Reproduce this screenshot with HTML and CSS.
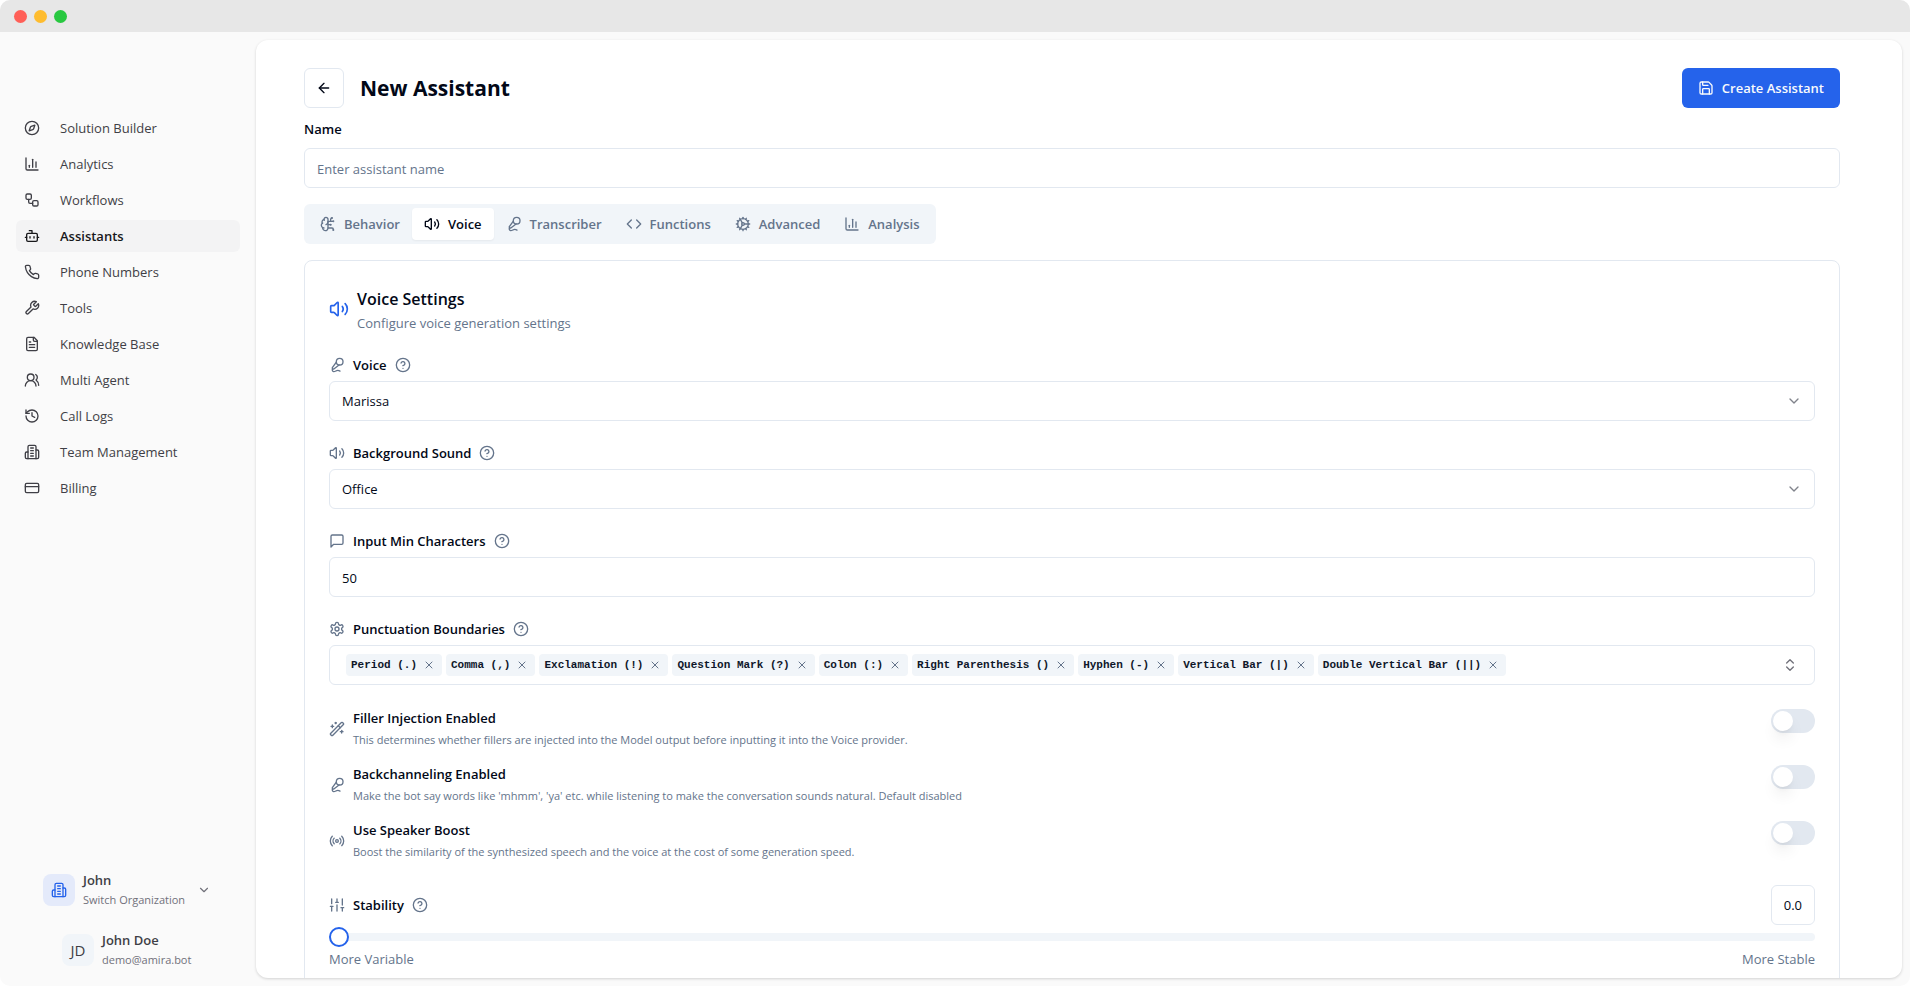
FILE: index.html
```
<!DOCTYPE html>
<html lang="en">
<head>
  <meta charset="utf-8">
  <meta name="viewport" content="width=device-width, initial-scale=1">
  <title>New Assistant</title>
  <link rel="stylesheet" href="styles.css">
</head>
<body>
  <!-- icon sprite -->
  <svg class="sprite" aria-hidden="true">
    <symbol id="i-compass" viewBox="0 0 24 24"><circle cx="12" cy="12" r="10"/><path d="m16.24 7.76-1.804 5.411a2 2 0 0 1-1.265 1.265L7.76 16.24l1.804-5.411a2 2 0 0 1 1.265-1.265z"/></symbol>
    <symbol id="i-chart" viewBox="0 0 24 24"><path d="M3 3v16a2 2 0 0 0 2 2h16"/><path d="M18 17V9"/><path d="M13 17V5"/><path d="M8 17v-3"/></symbol>
    <symbol id="i-workflow" viewBox="0 0 24 24"><rect width="8" height="8" x="3" y="3" rx="2"/><path d="M7 11v4a2 2 0 0 0 2 2h4"/><rect width="8" height="8" x="13" y="13" rx="2"/></symbol>
    <symbol id="i-bot" viewBox="0 0 24 24"><path d="M12 8V4H8"/><rect width="16" height="12" x="4" y="8" rx="2"/><path d="M2 14h2"/><path d="M20 14h2"/><path d="M15 13v2"/><path d="M9 13v2"/></symbol>
    <symbol id="i-phone" viewBox="0 0 24 24"><path d="M22 16.92v3a2 2 0 0 1-2.18 2 19.79 19.79 0 0 1-8.63-3.07 19.5 19.5 0 0 1-6-6 19.79 19.79 0 0 1-3.07-8.67A2 2 0 0 1 4.11 2h3a2 2 0 0 1 2 1.72 12.84 12.84 0 0 0 .7 2.81 2 2 0 0 1-.45 2.11L8.09 9.91a16 16 0 0 0 6 6l1.27-1.27a2 2 0 0 1 2.11-.45 12.84 12.84 0 0 0 2.81.7A2 2 0 0 1 22 16.92z"/></symbol>
    <symbol id="i-wrench" viewBox="0 0 24 24"><path d="M14.7 6.3a1 1 0 0 0 0 1.4l1.6 1.6a1 1 0 0 0 1.4 0l3.77-3.77a6 6 0 0 1-7.94 7.94l-6.91 6.91a2.12 2.12 0 0 1-3-3l6.91-6.91a6 6 0 0 1 7.94-7.94l-3.76 3.76z"/></symbol>
    <symbol id="i-file" viewBox="0 0 24 24"><path d="M15 2H6a2 2 0 0 0-2 2v16a2 2 0 0 0 2 2h12a2 2 0 0 0 2-2V7Z"/><path d="M14 2v4a2 2 0 0 0 2 2h4"/><path d="M10 9H8"/><path d="M16 13H8"/><path d="M16 17H8"/></symbol>
    <symbol id="i-users" viewBox="0 0 24 24"><path d="M18 21a8 8 0 0 0-16 0"/><circle cx="10" cy="8" r="5"/><path d="M22 20c0-3.37-2-6.5-4-8a5 5 0 0 0-.45-8.3"/></symbol>
    <symbol id="i-history" viewBox="0 0 24 24"><path d="M3 12a9 9 0 1 0 9-9 9.75 9.75 0 0 0-6.74 2.74L3 8"/><path d="M3 3v5h5"/><path d="M12 7v5l4 2"/></symbol>
    <symbol id="i-building" viewBox="0 0 24 24"><path d="M6 22V4a2 2 0 0 1 2-2h8a2 2 0 0 1 2 2v18Z"/><path d="M6 12H4a2 2 0 0 0-2 2v6a2 2 0 0 0 2 2h2"/><path d="M18 9h2a2 2 0 0 1 2 2v9a2 2 0 0 1-2 2h-2"/><path d="M10 6h4"/><path d="M10 10h4"/><path d="M10 14h4"/><path d="M10 18h4"/></symbol>
    <symbol id="i-card" viewBox="0 0 24 24"><rect width="20" height="14" x="2" y="5" rx="2"/><path d="M2 10h20"/></symbol>
    <symbol id="i-down" viewBox="0 0 24 24"><path d="m6 9 6 6 6-6"/></symbol>
    <symbol id="i-updown" viewBox="0 0 24 24"><path d="m7 15 5 5 5-5"/><path d="m7 9 5-5 5 5"/></symbol>
    <symbol id="i-back" viewBox="0 0 24 24"><path d="m12 19-7-7 7-7"/><path d="M19 12H5"/></symbol>
    <symbol id="i-save" viewBox="0 0 24 24"><path d="M15.2 3a2 2 0 0 1 1.4.6l3.8 3.8a2 2 0 0 1 .6 1.4V19a2 2 0 0 1-2 2H5a2 2 0 0 1-2-2V5a2 2 0 0 1 2-2z"/><path d="M17 21v-7a1 1 0 0 0-1-1H8a1 1 0 0 0-1 1v7"/><path d="M7 3v4a1 1 0 0 0 1 1h7"/></symbol>
    <symbol id="i-brain" viewBox="0 0 24 24"><path d="M12 5a3 3 0 1 0-5.997.125 4 4 0 0 0-2.526 5.77 4 4 0 0 0 .556 6.588A4 4 0 1 0 12 18Z"/><path d="M9 13a4.500 4.500 0 0 0 3-4"/><path d="M6.003 5.125A3 3 0 0 0 6.401 6.500"/><path d="M3.477 10.896a4 4 0 0 1 .585-.396"/><path d="M6 18a4 4 0 0 1-1.967-.516"/><path d="M12 13h4"/><path d="M12 18h6a2 2 0 0 1 2 2v1"/><path d="M12 8h8"/><path d="M16 8V5a2 2 0 0 1 2-2"/><circle cx="16" cy="13" r=".5"/><circle cx="18" cy="3" r=".5"/><circle cx="20" cy="21" r=".5"/><circle cx="20" cy="8" r=".5"/></symbol>
    <symbol id="i-volume" viewBox="0 0 24 24"><path d="M11 4.702a.705.705 0 0 0-1.203-.498L6.413 7.587A1.400 1.400 0 0 1 5.416 8H3a1 1 0 0 0-1 1v6a1 1 0 0 0 1 1h2.416a1.400 1.400 0 0 1 .997.413l3.383 3.384A.705.705 0 0 0 11 19.298z"/><path d="M16 9a5 5 0 0 1 0 6"/><path d="M19.364 18.364a9 9 0 0 0 0-12.728"/></symbol>
    <symbol id="i-mic" viewBox="0 0 24 24"><path d="m11 7.601-5.994 8.190a1 1 0 0 0 .1 1.298l.817.818a1 1 0 0 0 1.314.087L15.090 12"/><path d="M16.500 21.174C15.500 20.500 14.372 20 13 20c-2.058 0-3.928 2.356-6 2-2.072-.356-2.775-3.369-1.500-4.500"/><circle cx="16" cy="7" r="5"/></symbol>
    <symbol id="i-code" viewBox="0 0 24 24"><path d="m16 18 6-6-6-6"/><path d="m8 6-6 6 6 6"/></symbol>
    <symbol id="i-cog" viewBox="0 0 24 24"><path d="M12 20a8 8 0 1 0 0-16 8 8 0 0 0 0 16Z"/><path d="M12 14a2 2 0 1 0 0-4 2 2 0 0 0 0 4Z"/><path d="M12 2v2"/><path d="M12 22v-2"/><path d="m17 20.660-1-1.730"/><path d="M11 10.270 7 3.340"/><path d="m20.660 17-1.730-1"/><path d="m3.340 7 1.730 1"/><path d="M14 12h8"/><path d="M2 12h2"/><path d="m20.660 7-1.730 1"/><path d="m3.340 17 1.730-1"/><path d="m17 3.340-1 1.730"/><path d="m11 13.730-4 6.930"/></symbol>
    <symbol id="i-help" viewBox="0 0 24 24"><circle cx="12" cy="12" r="10"/><path d="M9.090 9a3 3 0 0 1 5.830 1c0 2-3 3-3 3"/><path d="M12 17h.01"/></symbol>
    <symbol id="i-message" viewBox="0 0 24 24"><path d="M21 15a2 2 0 0 1-2 2H7l-4 4V5a2 2 0 0 1 2-2h14a2 2 0 0 1 2 2z"/></symbol>
    <symbol id="i-settings" viewBox="0 0 24 24"><path d="M12.220 2h-.44a2 2 0 0 0-2 2v.18a2 2 0 0 1-1 1.730l-.43.25a2 2 0 0 1-2 0l-.15-.08a2 2 0 0 0-2.730.73l-.22.38a2 2 0 0 0 .73 2.730l.15.1a2 2 0 0 1 1 1.720v.51a2 2 0 0 1-1 1.740l-.15.09a2 2 0 0 0-.73 2.730l.22.38a2 2 0 0 0 2.730.73l.15-.08a2 2 0 0 1 2 0l.43.25a2 2 0 0 1 1 1.730V20a2 2 0 0 0 2 2h.44a2 2 0 0 0 2-2v-.18a2 2 0 0 1 1-1.730l.43-.25a2 2 0 0 1 2 0l.15.08a2 2 0 0 0 2.730-.73l.22-.39a2 2 0 0 0-.73-2.730l-.15-.08a2 2 0 0 1-1-1.740v-.5a2 2 0 0 1 1-1.740l.15-.09a2 2 0 0 0 .73-2.730l-.22-.38a2 2 0 0 0-2.730-.73l-.15.08a2 2 0 0 1-2 0l-.43-.25a2 2 0 0 1-1-1.730V4a2 2 0 0 0-2-2z"/><circle cx="12" cy="12" r="3"/></symbol>
    <symbol id="i-x" viewBox="0 0 24 24"><path d="M18 6 6 18"/><path d="m6 6 12 12"/></symbol>
    <symbol id="i-wand" viewBox="0 0 24 24"><path d="m21.640 3.640-1.280-1.280a1.210 1.210 0 0 0-1.720 0L2.360 18.640a1.210 1.210 0 0 0 0 1.720l1.280 1.280a1.200 1.200 0 0 0 1.720 0L21.640 5.360a1.200 1.200 0 0 0 0-1.720"/><path d="m14 7 3 3"/><path d="M5 6v4"/><path d="M19 14v4"/><path d="M10 2v2"/><path d="M7 8H3"/><path d="M21 16h-4"/><path d="M11 3H9"/></symbol>
    <symbol id="i-radio" viewBox="0 0 24 24"><path d="M4.900 19.100C1 15.200 1 8.800 4.900 4.900"/><path d="M7.800 16.200c-2.300-2.300-2.300-6.100 0-8.500"/><circle cx="12" cy="12" r="2"/><path d="M16.200 7.800c2.300 2.300 2.300 6.100 0 8.500"/><path d="M19.100 4.900C23 8.800 23 15.100 19.100 19"/></symbol>
    <symbol id="i-sliders" viewBox="0 0 24 24"><path d="M4 21v-7"/><path d="M4 10V3"/><path d="M12 21v-9"/><path d="M12 8V3"/><path d="M20 21v-5"/><path d="M20 12V3"/><path d="M2 14h4"/><path d="M10 8h4"/><path d="M18 16h4"/></symbol>
  </svg>

  <div class="window">
    <div class="titlebar">
      <span class="dot red"></span>
      <span class="dot yellow"></span>
      <span class="dot green"></span>
    </div>

    <div class="layout">
      <aside class="sidebar">
        <nav class="nav">
          <a href="#" class="nav-item"><svg class="icon"><use href="#i-compass"/></svg>Solution Builder</a>
          <a href="#" class="nav-item"><svg class="icon"><use href="#i-chart"/></svg>Analytics</a>
          <a href="#" class="nav-item"><svg class="icon"><use href="#i-workflow"/></svg>Workflows</a>
          <a href="#" class="nav-item active"><svg class="icon"><use href="#i-bot"/></svg>Assistants</a>
          <a href="#" class="nav-item"><svg class="icon"><use href="#i-phone"/></svg>Phone Numbers</a>
          <a href="#" class="nav-item"><svg class="icon"><use href="#i-wrench"/></svg>Tools</a>
          <a href="#" class="nav-item"><svg class="icon"><use href="#i-file"/></svg>Knowledge Base</a>
          <a href="#" class="nav-item"><svg class="icon"><use href="#i-users"/></svg>Multi Agent</a>
          <a href="#" class="nav-item"><svg class="icon"><use href="#i-history"/></svg>Call Logs</a>
          <a href="#" class="nav-item"><svg class="icon"><use href="#i-building"/></svg>Team Management</a>
          <a href="#" class="nav-item"><svg class="icon"><use href="#i-card"/></svg>Billing</a>
        </nav>

        <div class="account">
          <button type="button" class="account-row">
            <span class="avatar org"><svg class="icon"><use href="#i-building"/></svg></span>
            <span class="account-text">
              <span class="account-name">John</span>
              <span class="account-sub">Switch Organization</span>
            </span>
            <svg class="icon account-chevron"><use href="#i-down"/></svg>
          </button>
          <button type="button" class="account-row user">
            <span class="avatar">JD</span>
            <span class="account-text">
              <span class="account-name">John Doe</span>
              <span class="account-sub">demo@amira.bot</span>
            </span>
          </button>
        </div>
      </aside>

      <main class="panel">
        <header class="page-header">
          <button type="button" class="back-button" aria-label="Back"><svg class="icon"><use href="#i-back"/></svg></button>
          <h1 class="page-title">New Assistant</h1>
          <button type="button" class="create-button"><svg class="icon"><use href="#i-save"/></svg>Create Assistant</button>
        </header>

        <label class="name-label" for="name">Name</label>
        <input class="control" id="name" type="text" placeholder="Enter assistant name">

        <div class="tabs" role="tablist">
          <button type="button" class="tab" role="tab"><svg class="icon"><use href="#i-brain"/></svg>Behavior</button>
          <button type="button" class="tab active" role="tab" aria-selected="true"><svg class="icon"><use href="#i-volume"/></svg>Voice</button>
          <button type="button" class="tab" role="tab"><svg class="icon"><use href="#i-mic"/></svg>Transcriber</button>
          <button type="button" class="tab" role="tab"><svg class="icon"><use href="#i-code"/></svg>Functions</button>
          <button type="button" class="tab" role="tab"><svg class="icon"><use href="#i-cog"/></svg>Advanced</button>
          <button type="button" class="tab" role="tab"><svg class="icon"><use href="#i-chart"/></svg>Analysis</button>
        </div>

        <section class="card">
          <div class="card-header">
            <svg class="icon card-icon"><use href="#i-volume"/></svg>
            <div>
              <h2 class="card-title">Voice Settings</h2>
              <p class="card-desc">Configure voice generation settings</p>
            </div>
          </div>

          <div class="field">
            <div class="field-head">
              <svg class="icon"><use href="#i-mic"/></svg>
              <label class="label" for="voice">Voice</label>
              <svg class="icon help"><use href="#i-help"/></svg>
            </div>
            <div class="select-wrap">
              <select class="control" id="voice"><option>Marissa</option></select>
              <svg class="icon select-icon"><use href="#i-down"/></svg>
            </div>
          </div>

          <div class="field">
            <div class="field-head">
              <svg class="icon"><use href="#i-volume"/></svg>
              <label class="label" for="background">Background Sound</label>
              <svg class="icon help"><use href="#i-help"/></svg>
            </div>
            <div class="select-wrap">
              <select class="control" id="background"><option>Office</option></select>
              <svg class="icon select-icon"><use href="#i-down"/></svg>
            </div>
          </div>

          <div class="field">
            <div class="field-head">
              <svg class="icon"><use href="#i-message"/></svg>
              <label class="label" for="min-chars">Input Min Characters</label>
              <svg class="icon help"><use href="#i-help"/></svg>
            </div>
            <input class="control" id="min-chars" type="text" inputmode="numeric" value="50">
          </div>

          <div class="field">
            <div class="field-head">
              <svg class="icon"><use href="#i-settings"/></svg>
              <span class="label" id="punctuation-label">Punctuation Boundaries</span>
              <svg class="icon help"><use href="#i-help"/></svg>
            </div>
            <div class="control chips" role="group" aria-labelledby="punctuation-label">
              <span class="chip">Period (.)<button type="button" class="chip-remove" aria-label="Remove"><svg class="icon"><use href="#i-x"/></svg></button></span>
              <span class="chip">Comma (,)<button type="button" class="chip-remove" aria-label="Remove"><svg class="icon"><use href="#i-x"/></svg></button></span>
              <span class="chip">Exclamation (!)<button type="button" class="chip-remove" aria-label="Remove"><svg class="icon"><use href="#i-x"/></svg></button></span>
              <span class="chip">Question Mark (?)<button type="button" class="chip-remove" aria-label="Remove"><svg class="icon"><use href="#i-x"/></svg></button></span>
              <span class="chip">Colon (:)<button type="button" class="chip-remove" aria-label="Remove"><svg class="icon"><use href="#i-x"/></svg></button></span>
              <span class="chip">Right Parenthesis ()<button type="button" class="chip-remove" aria-label="Remove"><svg class="icon"><use href="#i-x"/></svg></button></span>
              <span class="chip">Hyphen (-)<button type="button" class="chip-remove" aria-label="Remove"><svg class="icon"><use href="#i-x"/></svg></button></span>
              <span class="chip">Vertical Bar (|)<button type="button" class="chip-remove" aria-label="Remove"><svg class="icon"><use href="#i-x"/></svg></button></span>
              <span class="chip">Double Vertical Bar (||)<button type="button" class="chip-remove" aria-label="Remove"><svg class="icon"><use href="#i-x"/></svg></button></span>
              <button type="button" class="chips-toggle" aria-label="Open list"><svg class="icon"><use href="#i-updown"/></svg></button>
            </div>
          </div>

          <div class="toggles">
            <div class="toggle-row">
              <svg class="icon"><use href="#i-wand"/></svg>
              <div class="toggle-text">
                <label class="label" for="filler">Filler Injection Enabled</label>
                <p class="hint">This determines whether fillers are injected into the Model output before inputting it into the Voice provider.</p>
              </div>
              <input class="switch" id="filler" type="checkbox" role="switch">
            </div>
            <div class="toggle-row">
              <svg class="icon"><use href="#i-mic"/></svg>
              <div class="toggle-text">
                <label class="label" for="backchannel">Backchanneling Enabled</label>
                <p class="hint">Make the bot say words like 'mhmm', 'ya' etc. while listening to make the conversation sounds natural. Default disabled</p>
              </div>
              <input class="switch" id="backchannel" type="checkbox" role="switch">
            </div>
            <div class="toggle-row">
              <svg class="icon"><use href="#i-radio"/></svg>
              <div class="toggle-text">
                <label class="label" for="boost">Use Speaker Boost</label>
                <p class="hint">Boost the similarity of the synthesized speech and the voice at the cost of some generation speed.</p>
              </div>
              <input class="switch" id="boost" type="checkbox" role="switch">
            </div>
          </div>

          <div class="slider-field">
            <div class="slider-head">
              <div class="field-head">
                <svg class="icon"><use href="#i-sliders"/></svg>
                <label class="label" for="stability">Stability</label>
                <svg class="icon help"><use href="#i-help"/></svg>
              </div>
              <output class="slider-value" for="stability">0.0</output>
            </div>
            <input class="slider" id="stability" type="range" min="0" max="1" step="0.1" value="0">
            <div class="slider-labels">
              <span>More Variable</span>
              <span>More Stable</span>
            </div>
          </div>
        </section>
      </main>
    </div>
  </div>
</body>
</html>
```
FILE: styles.css
```
* {
  box-sizing: border-box;
}

body {
  margin: 0;
  background: #fff;
  color: #020817;
  font-family: "Open Sans", "Noto Sans", sans-serif;
  font-size: 13px;
  line-height: 20px;
}

button,
input,
select {
  font: inherit;
  color: inherit;
}

button {
  border: none;
  background: none;
  padding: 0;
  cursor: pointer;
}

h1,
h2,
p {
  margin: 0;
}

.sprite {
  position: absolute;
  width: 0;
  height: 0;
}

.icon {
  width: 16px;
  height: 16px;
  flex: none;
  fill: none;
  stroke: currentColor;
  stroke-width: 2;
  stroke-linecap: round;
  stroke-linejoin: round;
}

/* window frame */
.window {
  display: flex;
  flex-direction: column;
  height: 100vh;
  overflow: hidden;
  border-radius: 10px;
  background: #fafafa;
}

.titlebar {
  display: flex;
  align-items: center;
  flex: none;
  gap: 7px;
  height: 32px;
  padding: 1px 14px 0;
  background: #e7e7e7;
}

.dot {
  width: 13px;
  height: 13px;
  border-radius: 50%;
}

.red { background: #ff5f57; }
.yellow { background: #febc2e; }
.green { background: #28c840; }

.layout {
  display: flex;
  flex: 1;
  min-height: 0;
}

/* sidebar */
.sidebar {
  display: flex;
  flex-direction: column;
  justify-content: space-between;
  flex: none;
  width: 256px;
  padding: 80px 16px 16px;
  color: #3f3f46;
}

.nav {
  display: flex;
  flex-direction: column;
  gap: 4px;
}

.nav-item {
  display: flex;
  align-items: center;
  gap: 20px;
  height: 32px;
  padding: 0 8px;
  border-radius: 6px;
  color: inherit;
  text-decoration: none;
}

.nav-item.active {
  background: #f3f3f4;
  color: #18181b;
  font-weight: 600;
}

.account {
  display: flex;
  flex-direction: column;
  gap: 20px;
  padding-left: 27px;
}

.account-row {
  display: flex;
  align-items: center;
  gap: 8px;
  text-align: left;
}

.account-row.user {
  padding-left: 19px;
}

.avatar {
  display: flex;
  align-items: center;
  justify-content: center;
  width: 32px;
  height: 32px;
  border-radius: 8px;
  background: #f1f5f9;
  font-size: 15px;
}

.avatar.org {
  background: #e4eafa;
  color: #2563eb;
}

.account-text {
  display: flex;
  flex-direction: column;
}

.account-name {
  font-weight: 600;
}

.account-sub {
  color: #71717a;
  font-size: 11px;
}

.account-chevron {
  width: 14px;
  height: 14px;
  margin-left: 4px;
  color: #71717a;
}

/* main panel */
.panel {
  flex: 1;
  min-width: 0;
  margin: 8px 8px 8px 0;
  padding: 28px 62px 0 48px;
  overflow: hidden;
  border-radius: 12px;
  background: #fff;
  box-shadow: 0 1px 3px rgba(0, 0, 0, 0.16);
}

.page-header {
  display: flex;
  align-items: center;
  gap: 16px;
  margin-bottom: 11px;
}

.back-button {
  display: flex;
  align-items: center;
  justify-content: center;
  width: 40px;
  height: 40px;
  border: 1px solid #e2e8f0;
  border-radius: 6px;
}

.page-title {
  font-size: 21px;
  line-height: 32px;
  font-weight: 700;
}

.create-button {
  display: flex;
  align-items: center;
  gap: 8px;
  height: 40px;
  margin-left: auto;
  padding: 0 16px;
  border-radius: 6px;
  background: #2563eb;
  color: #f8fafc;
  font-weight: 600;
}

.name-label {
  display: block;
  margin-bottom: 9px;
  font-weight: 600;
}

.control {
  display: block;
  width: 100%;
  height: 40px;
  padding: 0 12px;
  border: 1px solid #e2e8f0;
  border-radius: 6px;
  background: #fff;
}

input.control {
  padding-top: 1px;
}

.control::placeholder {
  color: #64748b;
  opacity: 1;
}

.tabs {
  display: inline-flex;
  margin: 16px 0;
  padding: 4px;
  border-radius: 6px;
  background: #f1f5f9;
  color: #64748b;
  vertical-align: top;
}

.tab {
  display: flex;
  align-items: center;
  gap: 8px;
  height: 32px;
  padding: 0 12px;
  border-radius: 4px;
  font-weight: 600;
}

.tab.active {
  background: #fff;
  color: #020817;
  box-shadow: 0 1px 2px rgba(0, 0, 0, 0.05);
}

/* voice settings card */
.card {
  padding: 24px;
  border: 1px solid #e2e8f0;
  border-radius: 8px;
}

.card-header {
  display: flex;
  align-items: center;
  gap: 8px;
  margin-bottom: 22px;
}

.card-icon {
  width: 20px;
  height: 20px;
  color: #2563eb;
}

.card-title {
  font-size: 16px;
  line-height: 28px;
  font-weight: 600;
}

.card-desc {
  color: #64748b;
}

.field {
  margin-bottom: 22px;
}

.field-head {
  display: flex;
  align-items: center;
  gap: 8px;
  color: #64748b;
}

.field > .field-head {
  margin-bottom: 6px;
}

.label {
  color: #020817;
  font-weight: 600;
}

.select-wrap {
  position: relative;
}

.select-wrap .control {
  appearance: none;
}

.select-icon {
  position: absolute;
  top: 12px;
  right: 13px;
  color: #80838b;
  pointer-events: none;
}

.chips {
  display: flex;
  align-items: center;
  gap: 4px;
  padding: 0 16px;
}

.chip {
  display: flex;
  align-items: center;
  height: 22px;
  padding: 0 7px 0 5px;
  border-radius: 4px;
  background: #f1f5f9;
  color: #0f172a;
  font-family: "Liberation Mono", monospace;
  font-size: 11px;
  font-weight: 700;
  white-space: nowrap;
}

.chip-remove {
  display: flex;
  margin-left: 6px;
  color: #64748b;
}

.chip-remove .icon {
  width: 12px;
  height: 12px;
}

.chips-toggle {
  display: flex;
  margin-left: auto;
  color: #71717a;
}

.toggles {
  display: flex;
  flex-direction: column;
  gap: 12px;
}

.toggle-row {
  display: flex;
  align-items: center;
  gap: 8px;
  height: 44px;
  color: #64748b;
}

.toggle-text {
  flex: 1;
}

.toggle-text .label {
  display: block;
}

.hint {
  margin-top: 2px;
  font-size: 11px;
}

.switch {
  appearance: none;
  align-self: flex-start;
  width: 44px;
  height: 24px;
  margin: 2px 0 0;
  padding: 2px;
  border-radius: 12px;
  background: #e2e8f0;
  cursor: pointer;
}

.switch::before {
  content: "";
  display: block;
  width: 20px;
  height: 20px;
  border-radius: 50%;
  background: #fff;
  box-shadow: 0 10px 15px -3px rgba(0, 0, 0, 0.1), 0 4px 6px -4px rgba(0, 0, 0, 0.1);
}

.switch:checked {
  background: #2563eb;
}

.switch:checked::before {
  margin-left: 20px;
}

.slider-field {
  margin-top: 22px;
}

.slider-head {
  display: flex;
  align-items: center;
  justify-content: space-between;
}

.slider-value {
  display: block;
  padding: 9px 12px;
  border: 1px solid #e2e8f0;
  border-radius: 6px;
}

.slider {
  appearance: none;
  display: block;
  width: 100%;
  height: 20px;
  margin: 2px 0;
  background: none;
}

.slider::-webkit-slider-runnable-track {
  height: 8px;
  border-radius: 4px;
  background: #f1f5f9;
}

.slider::-webkit-slider-thumb {
  appearance: none;
  width: 20px;
  height: 20px;
  margin-top: -6px;
  border: 2px solid #2563eb;
  border-radius: 50%;
  background: #fff;
}

.slider-labels {
  display: flex;
  justify-content: space-between;
  color: #64748b;
}
```
